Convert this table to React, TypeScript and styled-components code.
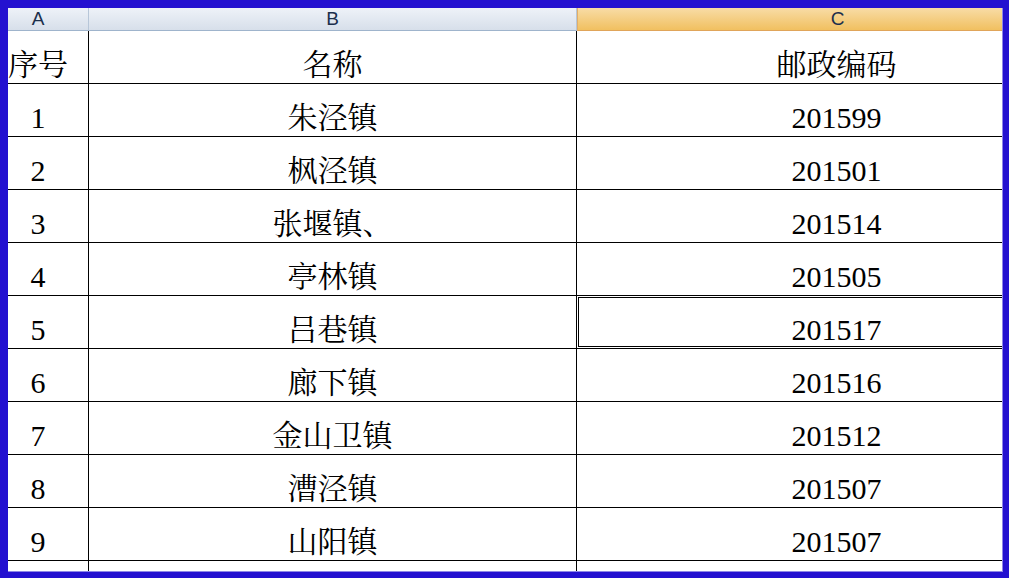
import React from "react";
import styled, { createGlobalStyle, css } from "styled-components";

const Global = createGlobalStyle`
  html, body { margin: 0; padding: 0; background: #2411d0; }
  #root { width: 1009px; height: 578px; }
`;

const Frame = styled.div`
  width: 1009px;
  height: 578px;
  box-sizing: border-box;
  padding: 8px 6px 6px 8px;
  background: #2411d0;
`;

const Sheet = styled.div`
  width: 995px;
  height: 564px;
  box-sizing: border-box;
  background: #fff;
  overflow: hidden;
  border-right: 1px solid #8f86e6;
  border-bottom: 1px solid #8f86e6;
  display: grid;
  grid-template-columns: 81px 488px 520px;
  grid-template-rows: 23px repeat(10, 53px) 12px;
`;

const HeaderCell = styled.div<{ $active?: boolean; $first?: boolean }>`
  box-sizing: border-box;
  display: flex;
  align-items: center;
  justify-content: center;
  padding-right: ${(p) => (p.$first ? "20px" : "0")};
  font-family: "Liberation Sans", Arial, sans-serif;
  font-size: 19px;
  color: #1b2f4c;
  background: linear-gradient(#eef2f8, #d7dfea);
  border-bottom: 1px solid #9fb4cc;
  border-right: 1px solid #b7c6d8;
  ${(p) =>
    p.$active &&
    css`
      background: linear-gradient(#f8dca6, #f1c060);
      border-bottom: 1px solid #e0a55a;
      border-left: 1px solid #e2ae68;
      border-right: none;
    `}
`;

const Cell = styled.div<{ $first?: boolean; $selected?: boolean }>`
  position: relative;
  box-sizing: border-box;
  display: flex;
  align-items: flex-end;
  justify-content: center;
  padding-bottom: 3px;
  padding-right: ${(p) => (p.$first ? "20px" : "0")};
  border-right: 1px solid #000;
  border-bottom: 1px solid #000;
  font-family: "Liberation Serif", "Noto Serif CJK SC", "Noto Sans CJK SC", serif;
  font-size: 30px;
  line-height: 30px;
  color: #000;
  white-space: nowrap;
  ${(p) =>
    p.$selected &&
    css`
      &::after {
        content: "";
        position: absolute;
        top: 1px;
        left: 1px;
        right: 1px;
        bottom: 1px;
        border: 1px solid #000;
      }
    `}
`;

const TailCell = styled.div`
  border-right: 1px solid #000;
`;

const rows: [string, string, string][] = [
  ["序号", "名称", "邮政编码"],
  ["1", "朱泾镇", "201599"],
  ["2", "枫泾镇", "201501"],
  ["3", "张堰镇、", "201514"],
  ["4", "亭林镇", "201505"],
  ["5", "吕巷镇", "201517"],
  ["6", "廊下镇", "201516"],
  ["7", "金山卫镇", "201512"],
  ["8", "漕泾镇", "201507"],
  ["9", "山阳镇", "201507"],
];

export default function App() {
  return (
    <>
      <Global />
      <Frame>
        <Sheet>
          <HeaderCell $first>A</HeaderCell>
          <HeaderCell>B</HeaderCell>
          <HeaderCell $active>C</HeaderCell>
          {rows.map((r, i) => (
            <React.Fragment key={i}>
              <Cell $first>{r[0]}</Cell>
              <Cell>{r[1]}</Cell>
              <Cell $selected={i === 5}>{r[2]}</Cell>
            </React.Fragment>
          ))}
          <TailCell />
          <TailCell />
          <TailCell />
        </Sheet>
      </Frame>
    </>
  );
}
